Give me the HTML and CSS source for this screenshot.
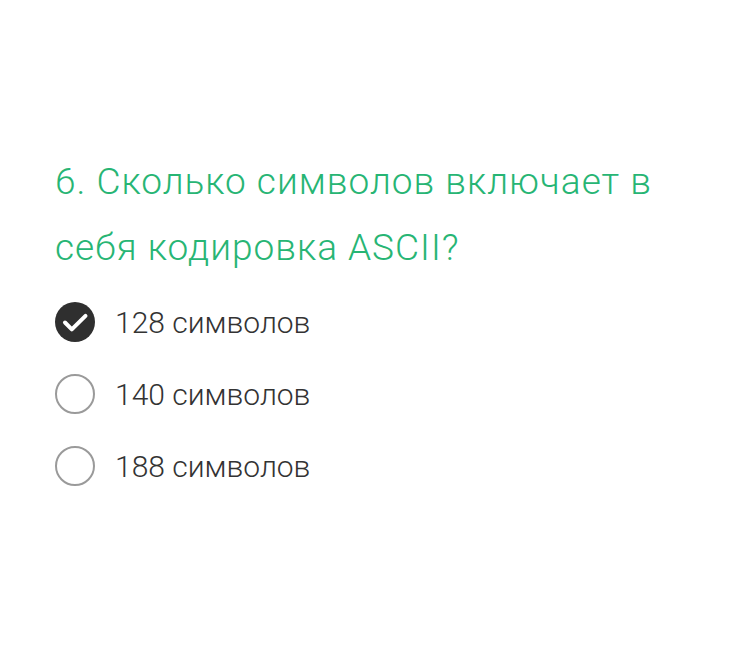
FILE: index.html
```html
<!DOCTYPE html>
<html lang="ru">
<head>
<meta charset="utf-8">
<link rel="stylesheet" href="styles.css">
</head>
<body>
<main class="quiz">
  <h1 class="question">6. Сколько символов включает в себя кодировка ASCII?</h1>
  <ul class="options">
    <li class="option">
      <span class="radio checked">
        <svg viewBox="0 0 40 40" width="40" height="40"><circle cx="20" cy="20" r="20" fill="#2f2f2f"/><path d="M10 20.5 L16.8 27.3 L30.5 13.8" fill="none" stroke="#fff" stroke-width="4" stroke-linecap="round" stroke-linejoin="round"/></svg>
      </span>
      <span class="label">128 символов</span>
    </li>
    <li class="option">
      <span class="radio"></span>
      <span class="label">140 символов</span>
    </li>
    <li class="option">
      <span class="radio"></span>
      <span class="label">188 символов</span>
    </li>
  </ul>
</main>
</body>
</html>
```
FILE: styles.css
```css
html, body {
  margin: 0;
  padding: 0;
  background: #fff;
}
body {
  font-family: Roboto, "Liberation Sans", Arial, sans-serif;
}
.quiz {
  padding: 149px 40px 0 55px;
}
.question {
  margin: 0;
  font-size: 37px;
  font-weight: 300;
  line-height: 66px;
  letter-spacing: 1px;
  color: #27b574;
  max-width: 640px;
}
.options {
  list-style: none;
  margin: 5px 0 0;
  padding: 0;
}
.option {
  display: flex;
  align-items: center;
  gap: 20px;
  height: 72px;
}
.radio {
  width: 40px;
  height: 40px;
  box-sizing: border-box;
  border: 2px solid #9a9a9a;
  border-radius: 50%;
  flex: none;
}
.radio.checked {
  border: none;
}
.radio svg {
  display: block;
}
.label {
  font-size: 30px;
  font-weight: 300;
  letter-spacing: 0;
  color: #333;
}
```
